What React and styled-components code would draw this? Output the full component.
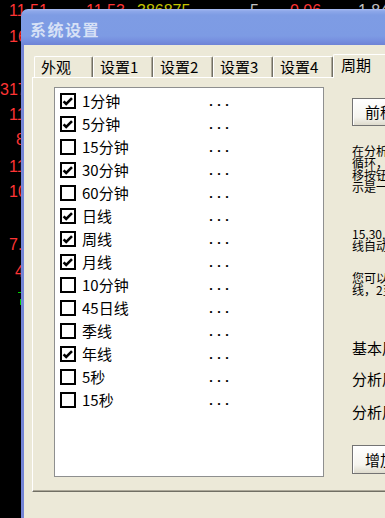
import React from "react";
import styled, { createGlobalStyle } from "styled-components";

const GlobalStyle = createGlobalStyle`
  html, body { margin: 0; padding: 0; background: #000; }
  body {
    width: 385px; height: 518px; overflow: hidden;
    font-family: "Noto Sans CJK SC", "Noto Sans", sans-serif;
  }
`;

const Screen = styled.div`
  position: relative;
  width: 385px;
  height: 518px;
  overflow: hidden;
  background: #000;
`;

const ChartLabel = styled.span`
  position: absolute;
  left: ${(p) => p.$x}px;
  top: ${(p) => p.$y}px;
  font-family: "Liberation Sans", Arial, sans-serif;
  font-size: 16px;
  line-height: 16px;
  color: ${(p) => p.$c};
  white-space: nowrap;
`;

const ChartMarks = styled.svg`
  position: absolute;
  left: 15px;
  top: 288px;
`;

const Window = styled.div`
  position: absolute;
  left: 21px;
  top: 9px;
  width: 420px;
  height: 540px;
  display: flex;
  flex-direction: column;
  border-top-left-radius: 7px;
  overflow: hidden;
`;

const TitleBar = styled.div`
  height: 36px;
  flex: none;
  display: flex;
  align-items: center;
  padding: 3px 0 0 9px;
  box-sizing: border-box;
  background: linear-gradient(
    to bottom,
    #aabcf2 0px,
    #8ea8ea 2px,
    #7e9ce4 6px,
    #7d9be4 27px,
    #7791e0 31px,
    #6e83d6 36px
  );
`;

const Title = styled.span`
  font-size: 16px;
  font-weight: bold;
  letter-spacing: 1.5px;
  color: #d7e1f6;
  line-height: 16px;
`;

const Body = styled.div`
  flex: 1;
  border-left: 3px solid #7485d6;
  background: #ece9d8;
  padding: 9px 0 0 8px;
`;

const TabStrip = styled.div`
  position: relative;
  z-index: 1;
  display: flex;
  align-items: flex-end;
  height: 23px;
  padding-left: 2px;
`;

const Tab = styled.div`
  box-sizing: border-box;
  width: ${(p) => p.$w}px;
  height: ${(p) => (p.$active ? 24 : 21)}px;
  margin-bottom: ${(p) => (p.$active ? -1 : 0)}px;
  padding-left: ${(p) => (p.$active ? 7 : 6)}px;
  border-top: 1px solid #fff;
  border-left: 1px solid #fff;
  border-right: 1px solid #716f64;
  box-shadow: inset -1px 0 #aca899;
  border-radius: 2px 2px 0 0;
  background: #ece9d8;
  font-size: 15px;
  line-height: ${(p) => (p.$active ? 20 : 19)}px;
  color: #000;
  white-space: nowrap;
`;

const Panel = styled.div`
  box-sizing: border-box;
  height: 415px;
  border-top: 1px solid #fff;
  border-left: 1px solid #fff;
  border-bottom: 1px solid #716f64;
  box-shadow: inset 0 -1px #aca899;
  display: flex;
  align-items: flex-start;
  padding: 9px 0 0 21px;
`;

const ListBox = styled.div`
  box-sizing: border-box;
  flex: none;
  width: 270px;
  height: 390px;
  border: 1px solid #8e8f8f;
  background: #fff;
  padding: 5px 0 0 5px;
  display: flex;
  flex-direction: column;
`;

const CheckRow = styled.div`
  display: grid;
  grid-template-columns: 16px 119px auto;
  column-gap: 6px;
  height: 23px;
  align-items: start;
`;

const Box = styled.span`
  box-sizing: border-box;
  width: 16px;
  height: 16px;
  border: 2px solid #000;
  background: #fff;
  display: flex;
`;

const Label = styled.span`
  font-size: 15px;
  line-height: 16px;
  color: #000;
  white-space: nowrap;
`;

const Dots = styled.span`
  font-family: "Liberation Mono", "Courier New", monospace;
  font-size: 13.33px;
  line-height: 16px;
  margin-top: 2px;
  color: #000;
  font-weight: bold;
`;

const SidePane = styled.div`
  margin: 11px 0 0 28px;
  display: flex;
  flex-direction: column;
  align-items: flex-start;
  width: 140px;
`;

const PushButton = styled.button`
  box-sizing: border-box;
  width: 80px;
  height: ${(p) => p.$h}px;
  margin-top: ${(p) => p.$mt || 0}px;
  padding: 0 0 0 12px;
  text-align: left;
  font-family: "Noto Sans CJK SC", sans-serif;
  font-size: 15px;
  line-height: 16px;
  color: #000;
  border: 1px solid #737373;
  background: linear-gradient(to bottom, #ffffff 0%, #f5f4ee 70%, #dedbcd 100%);
  box-shadow: inset 1px 1px #fff;
`;

const HelpText = styled.div`
  margin-top: ${(p) => p.$mt}px;
  font-size: 12px;
  line-height: 12px;
  color: #000;
  white-space: nowrap;
`;

const FieldLabel = styled.div`
  margin-top: ${(p) => p.$mt}px;
  font-size: 15px;
  line-height: 16px;
  color: #000;
  white-space: nowrap;
`;

const Check = () => (
  <svg width="12" height="12" viewBox="0 0 12 12">
    <path d="M1.6 6.4 L4.2 9 L10 3.2" fill="none" stroke="#000" strokeWidth="2.6" />
  </svg>
);

const RED = "#ff3434";
const YEL = "#c4c400";
const GRY = "#c0c0c0";

const chartLabels = [
  { x: 9, y: 3, t: "11.51", c: RED },
  { x: 86, y: 3, t: "11.53", c: RED },
  { x: 137, y: 3, t: "386875", c: YEL },
  { x: 250, y: 3, t: "5", c: GRY },
  { x: 290, y: 3, t: "0.06", c: RED },
  { x: 358, y: 3, t: "1.84", c: GRY },
  { x: 9, y: 29, t: "16.08", c: RED },
  { x: 0, y: 82, t: "3170", c: RED },
  { x: 9, y: 107, t: "11", c: RED },
  { x: 16, y: 132, t: "8.5", c: RED },
  { x: 9, y: 159, t: "11", c: RED },
  { x: 9, y: 184, t: "10", c: RED },
  { x: 9, y: 237, t: "7.", c: RED },
  { x: 15, y: 264, t: "4", c: RED },
];

const periods = [
  ["1分钟", true],
  ["5分钟", true],
  ["15分钟", false],
  ["30分钟", true],
  ["60分钟", false],
  ["日线", true],
  ["周线", true],
  ["月线", true],
  ["10分钟", false],
  ["45日线", false],
  ["季线", false],
  ["年线", true],
  ["5秒", false],
  ["15秒", false],
];

const tabs = [
  { t: "外观", w: 59 },
  { t: "设置1", w: 60 },
  { t: "设置2", w: 60 },
  { t: "设置3", w: 60 },
  { t: "设置4", w: 60 },
  { t: "周期", w: 62, active: true },
];

export default function App() {
  return (
    <>
      <GlobalStyle />
      <Screen>
        {chartLabels.map((l, i) => (
          <ChartLabel key={i} $x={l.x} $y={l.y} $c={l.c}>
            {l.t}
          </ChartLabel>
        ))}
        <ChartMarks width="8" height="18" viewBox="0 0 8 18">
          <line x1="3" y1="4.5" x2="7" y2="4.5" stroke="#00d000" strokeWidth="1" />
          <line x1="5.5" y1="11" x2="5.5" y2="17" stroke="#00d000" strokeWidth="1" />
        </ChartMarks>

        <Window>
          <TitleBar>
            <Title>系统设置</Title>
          </TitleBar>
          <Body>
            <TabStrip>
              {tabs.map((t) => (
                <Tab key={t.t} $w={t.w} $active={t.active}>
                  {t.t}
                </Tab>
              ))}
            </TabStrip>
            <Panel>
              <ListBox>
                {periods.map(([name, on]) => (
                  <CheckRow key={name}>
                    <Box>{on && <Check />}</Box>
                    <Label>{name}</Label>
                    <Dots>...</Dots>
                  </CheckRow>
                ))}
              </ListBox>
              <SidePane>
                <PushButton $h={28}>前移</PushButton>
                <HelpText $mt={19}>
                  在分析图中按[*]键可在各周期间
                  <br />
                  循环，打勾的周期才参与循环，
                  <br />
                  移按钮可以调整周期的顺序，显
                  <br />
                  示是一样的。
                </HelpText>
                <HelpText $mt={35}>
                  15,30,60分钟线，日线，周
                  <br />
                  线自动生成。
                </HelpText>
                <HelpText $mt={20}>
                  您可以增加多个分钟线或日
                  <br />
                  线，2至300之间。
                </HelpText>
                <FieldLabel $mt={44}>基本周期</FieldLabel>
                <FieldLabel $mt={15}>分析周期1</FieldLabel>
                <FieldLabel $mt={17}>分析周期2</FieldLabel>
                <PushButton $h={29} $mt={25}>
                  增加
                </PushButton>
              </SidePane>
            </Panel>
          </Body>
        </Window>
      </Screen>
    </>
  );
}
